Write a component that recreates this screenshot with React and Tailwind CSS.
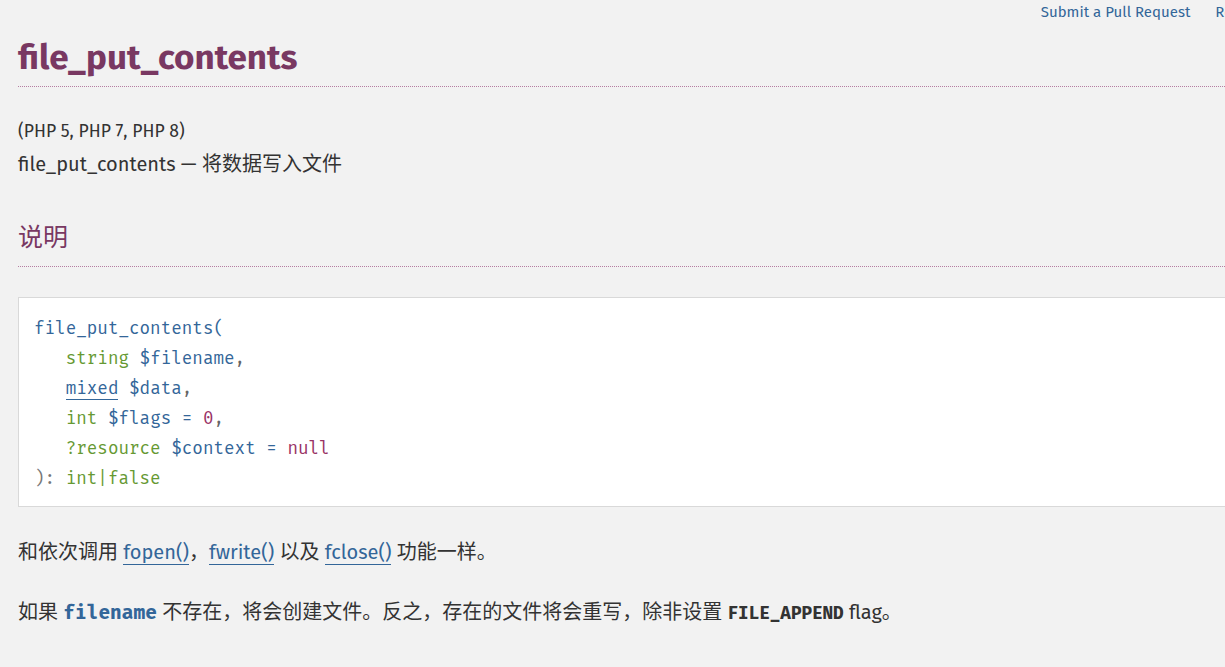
const sans = "font-['Fira_Sans','Noto_Sans','Noto_Sans_CJK_SC',sans-serif]";
const mono = "font-['Fira_Mono','DejaVu_Sans_Mono','Noto_Sans_CJK_SC',monospace]";

const Link = ({ children }) => (
  <a href="#" className="text-[#369] border-b border-[#369] no-underline">
    {children}
  </a>
);

export default function App() {
  return (
    <div className={`${sans} bg-[#f2f2f2] min-h-screen overflow-hidden text-[#333]`}>
      <div className="w-[1303px] pl-[18px]">
        <div className="flex justify-end gap-[25px] h-[24px] text-[15px] leading-[24px] text-[#369]">
          <a href="#">Submit a Pull Request</a>
          <a href="#">Report a Bug</a>
        </div>

        <h1 className="text-[35px] font-bold text-[#793862] leading-[40px] mt-[13px] pb-[9px] border-b border-dotted border-[#b57ea2]">
          file_put_contents
        </h1>

        <p className="text-[17.6px] leading-[26px] mt-[32px]">(PHP 5, PHP 7, PHP 8)</p>
        <p className="text-[20px] leading-[32px] mt-[3px]">
          file_put_contents — 将数据写入文件
        </p>

        <h2 className="text-[25px] font-normal text-[#793862] leading-[36px] mt-[40px] pb-[10px] border-b border-dotted border-[#b57ea2]">
          说明
        </h2>

        <div className={`${mono} mt-[30px] bg-white border border-[#d9d9d9] px-[15px] pt-[16px] pb-[12px] text-[17.6px] leading-[30px] whitespace-pre`}>
          <div className="text-[#369]">file_put_contents(</div>
          <div>
            {"   "}<span className="text-[#693]">string</span> <span className="text-[#369]">$filename</span><span className="text-[#666]">,</span>
          </div>
          <div>
            {"   "}<span className="text-[#369] border-b border-[#369]">mixed</span> <span className="text-[#369]">$data</span><span className="text-[#666]">,</span>
          </div>
          <div>
            {"   "}<span className="text-[#693]">int</span> <span className="text-[#369]">$flags</span> <span className="text-[#369]">=</span> <span className="text-[#936]">0</span><span className="text-[#666]">,</span>
          </div>
          <div>
            {"   "}<span className="text-[#693]">?resource</span> <span className="text-[#369]">$context</span> <span className="text-[#369]">=</span> <span className="text-[#936]">null</span>
          </div>
          <div>
            <span className="text-[#777]">): </span><span className="text-[#693]">int|false</span>
          </div>
        </div>

        <p className="text-[20px] leading-[30px] mt-[30px]">
          和依次调用 <Link>fopen()</Link>，<Link>fwrite()</Link> 以及 <Link>fclose()</Link> 功能一样。
        </p>
        <p className="text-[20px] leading-[30px] mt-[30px]">
          如果 <code className={`${mono} text-[19.5px] font-bold text-[#369]`}>filename</code> 不存在，将会创建文件。反之，存在的文件将会重写，除非设置{" "}
          <code className={`${mono} text-[17.6px] font-bold text-[#333]`}>FILE_APPEND</code> flag。
        </p>
      </div>
    </div>
  );
}
